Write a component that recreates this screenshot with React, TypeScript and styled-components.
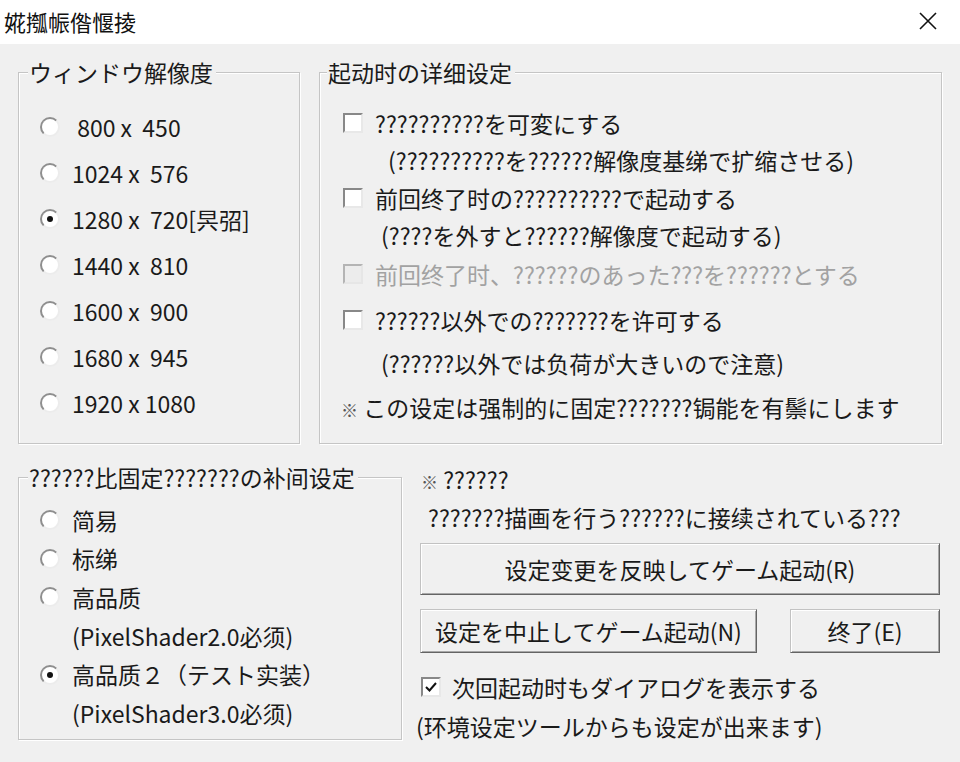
import React from "react";
import styled, { createGlobalStyle } from "styled-components";

const GlobalStyle = createGlobalStyle`
  html, body {
    margin: 0;
    padding: 0;
    background: #f0f0f0;
  }
  body {
    font-family: "Noto Sans CJK JP", "Noto Sans", sans-serif;
    color: #1a1a1a;
  }
`;

const resolutions = [
  { text: " 800 x  450" },
  { text: "1024 x  576" },
  { text: "1280 x  720[昗弨]", checked: true },
  { text: "1440 x  810" },
  { text: "1600 x  900" },
  { text: "1680 x  945" },
  { text: "1920 x 1080" },
];

export default function App() {
  return (
    <>
      <GlobalStyle />
      <Window>
        <TitleBar>
          <Title>婲摦帪偺愝掕</Title>
          <CloseButton>
            <svg width="18" height="18" viewBox="0 0 18 18">
              <path d="M1 1 L17 17 M17 1 L1 17" stroke="#111" strokeWidth="1.6" fill="none" />
            </svg>
          </CloseButton>
        </TitleBar>

        <Body>
          <TopRow>
            <Group $w={282} $h={387}>
              <Legend $off={9}>ウィンドウ解像度</Legend>
              <GroupContent $top={17} $left={21}>
                {resolutions.map((r) => (
                  <RadioRow key={r.text} $h={46}>
                    <Radio $checked={!!r.checked} />
                    <Label>{r.text}</Label>
                  </RadioRow>
                ))}
              </GroupContent>
            </Group>

            <Group $w={623} $h={387}>
              <Legend $off={7}>起动时の详细设定</Legend>
              <GroupContent $top={0} $left={21}>
                <Line $gap={19} $indent={2}>
                  <CheckBox />
                  <Label>??????????を可変にする</Label>
                </Line>
                <Line $gap={3} $indent={47}>
                  <Label>(??????????を??????解像度基绨で扩缩させる)</Label>
                </Line>
                <Line $gap={4} $indent={2}>
                  <CheckBox />
                  <Label>前回终了时の??????????で起动する</Label>
                </Line>
                <Line $gap={3} $indent={40}>
                  <Label>(????を外すと??????解像度で起动する)</Label>
                </Line>
                <Line $gap={5} $indent={2}>
                  <CheckBox $disabled />
                  <Label $disabled>前回终了时、??????のあった???を??????とする</Label>
                </Line>
                <Line $gap={12} $indent={2}>
                  <CheckBox />
                  <Label>??????以外での???????を许可する</Label>
                </Line>
                <Line $gap={9} $indent={40}>
                  <Label>(??????以外では负荷が大きいので注意)</Label>
                </Line>
                <Line $gap={10} $indent={0}>
                  <Label>
                    <Mark>※</Mark> この设定は强制的に固定???????锔能を有鬃にします
                  </Label>
                </Line>
              </GroupContent>
            </Group>
          </TopRow>

          <BottomRow>
            <Group $w={384} $h={278}>
              <Legend $off={9}>??????比固定???????の补间设定</Legend>
              <GroupContent $top={9} $left={21}>
                <RadioRow $h={38.6}>
                  <Radio />
                  <Label>简易</Label>
                </RadioRow>
                <RadioRow $h={38.6}>
                  <Radio />
                  <Label>标绨</Label>
                </RadioRow>
                <RadioRow $h={38.6}>
                  <Radio />
                  <Label>高品质</Label>
                </RadioRow>
                <SubRow $h={38.6}>(PixelShader2.0必须)</SubRow>
                <RadioRow $h={38.6}>
                  <Radio $checked />
                  <Label>高品质２（テスト实装）</Label>
                </RadioRow>
                <SubRow $h={38.6}>(PixelShader3.0必须)</SubRow>
              </GroupContent>
            </Group>

            <Panel>
              <Line $gap={0} $indent={5}>
                <Label>
                  <Mark>※</Mark> ??????
                </Label>
              </Line>
              <Line $gap={4} $indent={12}>
                <Label>???????描画を行う??????に接续されている???</Label>
              </Line>
              <Button $w={520} $h={52} $mt={9}>
                设定变更を反映してゲーム起动(R)
              </Button>
              <ButtonRow>
                <Button $w={337} $h={44} $mt={0}>
                  设定を中止してゲーム起动(N)
                </Button>
                <Button $w={150} $h={44} $mt={0}>
                  终了(E)
                </Button>
              </ButtonRow>
              <Line $gap={17} $indent={5} $textGap={11}>
                <CheckBox>
                  <svg width="14" height="14" viewBox="0 0 14 14">
                    <path d="M2 7 L5.5 10.5 L12 3" stroke="#111" strokeWidth="2" fill="none" />
                  </svg>
                </CheckBox>
                <Label>次回起动时もダイアログを表示する</Label>
              </Line>
              <Line $gap={5} $indent={0}>
                <Label>(环境设定ツールからも设定が出来ます)</Label>
              </Line>
            </Panel>
          </BottomRow>
        </Body>
      </Window>
    </>
  );
}

const Window = styled.div`
  width: 960px;
  height: 762px;
  display: flex;
  flex-direction: column;
  background: #f0f0f0;
  overflow: hidden;
`;

const TitleBar = styled.div`
  flex: none;
  height: 44px;
  background: #fff;
  display: flex;
  align-items: center;
  justify-content: space-between;
  padding-left: 4px;
`;

const Title = styled.div`
  font-size: 22px;
  line-height: 1;
  color: #111;
  margin-top: -2px;
`;

const CloseButton = styled.div`
  width: 64px;
  height: 44px;
  display: flex;
  align-items: center;
  justify-content: center;
  margin-top: -2px;
`;

const Body = styled.div`
  display: flex;
  flex-direction: column;
  gap: 18px;
  padding: 13px 18px 0 18px;
`;

const TopRow = styled.div`
  display: flex;
  align-items: flex-start;
  gap: 19px;
`;

const BottomRow = styled.div`
  display: flex;
  align-items: flex-start;
  gap: 14px;
`;

const Group = styled.fieldset<{ $w: number; $h: number }>`
  box-sizing: border-box;
  width: ${(p) => p.$w}px;
  height: ${(p) => p.$h}px;
  min-width: 0;
  margin: 0;
  padding: 0;
  border: 1px solid #c5c5c5;
  box-shadow: 1px 1px 0 #ffffff, inset 1px 1px 0 #ffffff;
`;

const Legend = styled.legend<{ $off: number }>`
  margin-left: ${(p) => p.$off}px;
  padding: 0 3px 0 1px;
  font-size: 23px;
  line-height: 30px;
  background: #f0f0f0;
  color: #1a1a1a;
`;

const GroupContent = styled.div<{ $top: number; $left: number }>`
  display: flex;
  flex-direction: column;
  padding: ${(p) => p.$top}px 0 0 ${(p) => p.$left}px;
`;

const RadioRow = styled.div<{ $h: number }>`
  display: flex;
  align-items: center;
  gap: 12px;
  height: ${(p) => p.$h}px;
`;

const SubRow = styled.div<{ $h: number }>`
  display: flex;
  align-items: center;
  height: ${(p) => p.$h}px;
  padding-left: 32px;
  font-size: 23px;
  white-space: pre;
`;

const Radio = styled.span<{ $checked?: boolean }>`
  box-sizing: border-box;
  flex: none;
  width: 20px;
  height: 20px;
  border-radius: 50%;
  border: 2px solid;
  border-color: #8e8e8e #ececec #ececec #8e8e8e;
  background: #fff;
  display: flex;
  align-items: center;
  justify-content: center;

  &::after {
    content: "";
    width: 6px;
    height: 6px;
    border-radius: 50%;
    background: #111;
    display: ${(p) => (p.$checked ? "block" : "none")};
  }
`;

const CheckBox = styled.span<{ $disabled?: boolean }>`
  box-sizing: border-box;
  flex: none;
  width: 20px;
  height: 20px;
  border: 2px solid;
  border-color: ${(p) =>
    p.$disabled ? "#b4b4b4 #e6e6e6 #e6e6e6 #b4b4b4" : "#888888 #e8e8e8 #e8e8e8 #888888"};
  background: ${(p) => (p.$disabled ? "#ececec" : "#fff")};
  display: flex;
  align-items: center;
  justify-content: center;
`;

const Line = styled.div<{ $gap: number; $indent: number; $textGap?: number }>`
  display: flex;
  align-items: center;
  gap: ${(p) => p.$textGap ?? 12}px;
  height: 34px;
  margin-top: ${(p) => p.$gap}px;
  padding-left: ${(p) => p.$indent}px;
`;

const Label = styled.span<{ $disabled?: boolean }>`
  font-size: 23px;
  line-height: 1;
  white-space: pre;
  color: ${(p) => (p.$disabled ? "#a2a2a2" : "#1a1a1a")};
`;

const Mark = styled.span`
  font-size: 17px;
  color: #555;
`;

const Panel = styled.div`
  width: 526px;
  display: flex;
  flex-direction: column;
`;

const ButtonRow = styled.div`
  display: flex;
  gap: 33px;
  margin: 14px 0 0 4px;
`;

const Button = styled.button<{ $w: number; $h: number; $mt: number }>`
  box-sizing: border-box;
  flex: none;
  width: ${(p) => p.$w}px;
  height: ${(p) => p.$h}px;
  margin: ${(p) => p.$mt}px 0 0 ${(p) => (p.$mt ? 4 : 0)}px;
  padding: 0;
  font-family: inherit;
  font-size: 23px;
  color: #1a1a1a;
  background: #f0f0f0;
  border: 1px solid;
  border-color: #c2c2c2 #646464 #646464 #c2c2c2;
  box-shadow: inset 1px 1px 0 #ffffff, inset -1px -1px 0 #a8a8a8;
  white-space: pre;
`;
